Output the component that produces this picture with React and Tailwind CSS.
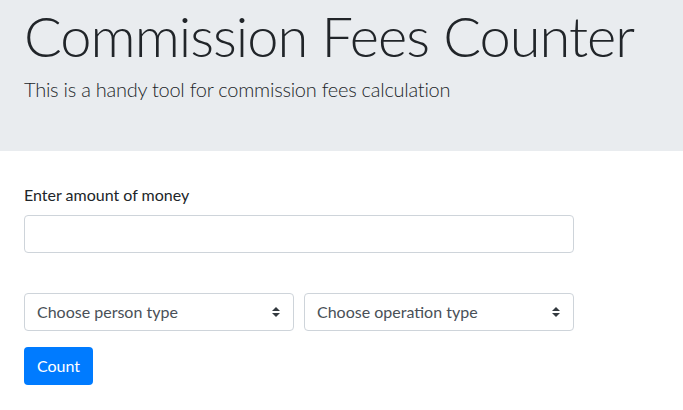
const font = { fontFamily: 'Lato, "Open Sans", sans-serif' };

function SelectBox({ label }) {
  return (
    <div className="relative flex h-[38px] flex-1 items-center rounded border border-[#ced4da] bg-white pl-3 pr-8 text-base text-[#495057]">
      <span>{label}</span>
      <svg
        className="absolute right-[13px] top-1/2 -translate-y-1/2"
        width="8"
        height="10"
        viewBox="0 0 4 5"
      >
        <path fill="#343a40" d="M2 0L0 2h4zm0 5L0 3h4z" />
      </svg>
    </div>
  );
}

export default function App() {
  return (
    <div className="min-h-[410px] bg-white text-[#212529]" style={font}>
      <header className="bg-[#e9ecef] px-6 pt-[2px] pb-[47px]">
        <h1 className="whitespace-nowrap text-[56px] leading-[67px] font-light tracking-[-1px]">
          Commission Fees Counter
        </h1>
        <p className="mt-[5px] whitespace-nowrap text-[20px] leading-[30px] font-light tracking-[-0.25px]">
          This is a handy tool for commission fees calculation
        </p>
      </header>

      <form className="mt-8 w-[550px] pl-6 box-content">
        <label className="block text-base leading-6">
          Enter amount of money
        </label>
        <input
          type="text"
          className="mt-2 block h-[38px] w-full rounded border border-[#ced4da] px-3 outline-none"
        />
        <div className="mt-[40px] flex gap-[10px]">
          <SelectBox label="Choose person type" />
          <SelectBox label="Choose operation type" />
        </div>
        <button
          type="button"
          className="mt-4 h-[38px] rounded bg-[#007bff] px-[13px] text-base text-white"
        >
          Count
        </button>
      </form>
    </div>
  );
}
